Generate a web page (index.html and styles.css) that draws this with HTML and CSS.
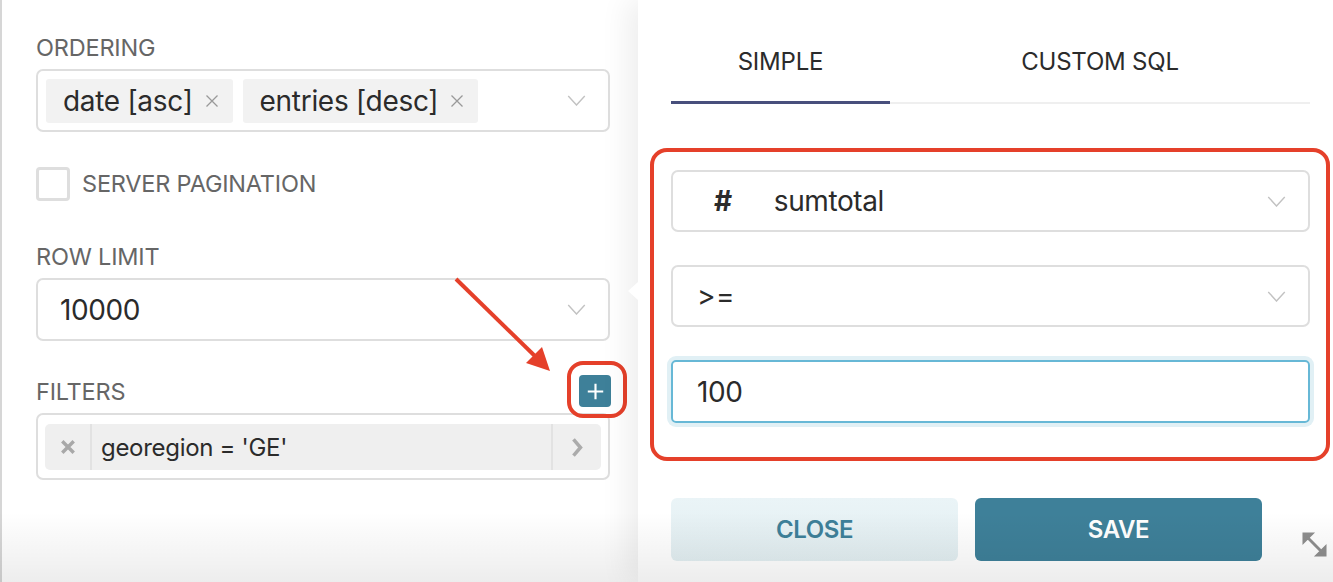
FILE: index.html
```html
<!DOCTYPE html>
<html>
<head>
<meta charset="utf-8">
<link rel="stylesheet" href="styles.css">
</head>
<body>
<div class="page">
  <section class="controls">
    <div class="label">ORDERING</div>
    <div class="select multi">
      <div class="tags">
        <span class="tag">date [asc]<svg class="tag-x" viewBox="0 0 14 14"><path d="M1.5 1.5l11 11M12.5 1.5l-11 11"/></svg></span>
        <span class="tag">entries [desc]<svg class="tag-x" viewBox="0 0 14 14"><path d="M1.5 1.5l11 11M12.5 1.5l-11 11"/></svg></span>
      </div>
      <svg class="chev" viewBox="0 0 20 12"><path d="M1 1l9 10 9-10"/></svg>
    </div>

    <label class="check-row">
      <span class="checkbox"></span>
      <span class="label">SERVER PAGINATION</span>
    </label>

    <div class="label row-limit">ROW LIMIT</div>
    <div class="select">
      <span class="value">10000</span>
      <svg class="chev" viewBox="0 0 20 12"><path d="M1 1l9 10 9-10"/></svg>
    </div>

    <div class="filters-head">
      <div class="label">FILTERS</div>
      <button class="add-btn"><svg viewBox="0 0 16 16"><path d="M8 1.5v13M1.5 8h13"/></svg></button>
    </div>
    <div class="filter-box">
      <div class="filter-pill">
        <span class="pill-x"><svg viewBox="0 0 14 14"><path d="M2 2l10 10M12 2L2 12"/></svg></span>
        <span class="pill-text">georegion = 'GE'</span>
        <span class="pill-go"><svg viewBox="0 0 10 18"><path d="M2 2l6 7-6 7"/></svg></span>
      </div>
    </div>

    <svg class="arrow" viewBox="0 0 110 100"><path class="shaft" d="M2 2L86 84"/><path class="head" d="M96 94L72 86L88 70Z"/></svg>
  </section>

  <section class="popover">
    <div class="tabs">
      <div class="tab active">SIMPLE</div>
      <div class="tab">CUSTOM SQL</div>
    </div>

    <div class="highlight">
      <div class="select">
        <span class="value"><span class="hash">#</span>sumtotal</span>
        <svg class="chev" viewBox="0 0 20 12"><path d="M1 1l9 10 9-10"/></svg>
      </div>
      <div class="select">
        <span class="value op">&gt;=</span>
        <svg class="chev" viewBox="0 0 20 12"><path d="M1 1l9 10 9-10"/></svg>
      </div>
      <div class="input">100</div>
    </div>

    <div class="buttons">
      <button class="btn btn-close">CLOSE</button>
      <button class="btn btn-save">SAVE</button>
    </div>

    <svg class="resize" viewBox="0 0 26 26"><path d="M2 2h8L2 10Z M24 24h-8l8-8Z M5 5l16 16"/></svg>
  </section>
</div>
</body>
</html>
```

FILE: styles.css
```css
* { box-sizing: border-box; }
html, body { margin: 0; padding: 0; }
body {
  width: 1333px;
  height: 582px;
  overflow: hidden;
  background: #fff;
  font-family: Inter, "Noto Sans", sans-serif;
  color: #2b2b2b;
}
.page {
  position: relative;
  display: flex;
  width: 1333px;
  height: 582px;
}
.page::after {
  content: "";
  position: absolute;
  left: 0; right: 0; bottom: 0;
  height: 70px;
  background: linear-gradient(to bottom, rgba(0,0,0,0), rgba(0,0,0,0.07));
  pointer-events: none;
  z-index: 5;
}

/* left controls */
.controls {
  position: relative;
  width: 638px;
  flex: none;
  border-left: 2px solid #d6d6d6;
  padding: 36px 28px 0 34px;
  display: flex;
  flex-direction: column;
}
.label {
  font-size: 23.5px;
  line-height: 24px;
  color: #666;
  letter-spacing: -0.2px;
}
.select {
  height: 63px;
  border: 2px solid #dedede;
  border-radius: 7px;
  display: flex;
  align-items: center;
  justify-content: space-between;
  padding: 0 22px 0 22px;
  background: #fff;
}
.controls > .select.multi { margin-top: 9px; padding-left: 8px; }
.tags { display: flex; gap: 10px; }
.tag {
  display: inline-flex;
  align-items: center;
  height: 44px;
  padding: 0 14px 0 17px;
  background: #f2f2f2;
  border-radius: 3px;
  font-size: 28px;
  color: #2b2b2b;
  letter-spacing: -0.3px;
}
.tag-x {
  width: 14px; height: 14px;
  margin-left: 12px;
  fill: none;
  stroke: #999;
  stroke-width: 1.3;
}
.chev {
  width: 19px; height: 11px;
  fill: none;
  stroke: #c2c2c2;
  stroke-width: 1.5;
  flex: none;
}
.value { font-size: 28px; color: #2b2b2b; letter-spacing: -0.4px; }

.check-row {
  margin-top: 35px;
  display: flex;
  align-items: center;
  height: 34px;
}
.checkbox {
  width: 34px; height: 34px;
  border: 3px solid #dedede;
  border-radius: 4px;
  margin-right: 12px;
}
.row-limit { margin-top: 44px; }
.controls > .select:not(.multi) { margin-top: 9px; }

.filters-head {
  margin-top: 34px;
  height: 32px;
  display: flex;
  align-items: center;
  justify-content: space-between;
}
.filters-head .label { margin-top: 2px; }
.add-btn {
  position: relative;
  width: 32px; height: 32px;
  margin-right: -1px;
  border: none;
  border-radius: 4px;
  background: #3e8099;
  padding: 0;
  display: flex;
  align-items: center;
  justify-content: center;
}
.add-btn svg { width: 19px; height: 19px; fill: none; stroke: #fff; stroke-width: 1.8; }
.add-btn::after {
  content: "";
  position: absolute;
  left: -12px; top: -14px;
  width: 60px; height: 57px;
  border: 4px solid #e5402a;
  border-radius: 16px;
  box-sizing: border-box;
}
.filter-box {
  margin-top: 6px;
  height: 67px;
  border: 2px solid #dedede;
  border-radius: 7px;
  padding: 9px 7px 0 7px;
}
.filter-pill {
  height: 46px;
  background: #efefef;
  border-radius: 5px;
  display: flex;
  align-items: stretch;
}
.pill-x {
  width: 47px;
  display: flex;
  align-items: center;
  justify-content: center;
  border-right: 2px solid #e2e2e2;
}
.pill-x svg { width: 16px; height: 16px; fill: none; stroke: #a8a8a8; stroke-width: 3; }
.pill-text {
  flex: 1;
  display: flex;
  align-items: center;
  padding-left: 9px;
  font-size: 24px;
  color: #2b2b2b;
  letter-spacing: -0.3px;
}
.pill-go {
  width: 50px;
  display: flex;
  align-items: center;
  justify-content: center;
  border-left: 2px solid #e2e2e2;
}
.pill-go svg { width: 12px; height: 21px; fill: none; stroke: #ababab; stroke-width: 3; }

.arrow {
  position: absolute;
  left: 452px; top: 277px;
  width: 110px; height: 100px;
  overflow: visible;
}
.arrow .shaft { stroke: #e5402a; stroke-width: 4; fill: none; }
.arrow .head { fill: #e5402a; }

/* popover */
.popover {
  position: relative;
  flex: 1;
  padding: 30px 23px 0 33px;
  background: #fff;
  box-shadow: -10px 0 28px rgba(0,0,0,0.07);
  z-index: 2;
}
.popover::before {
  content: "";
  position: absolute;
  left: -10px; top: 282px;
  width: 0; height: 0;
  border-top: 9px solid transparent;
  border-bottom: 9px solid transparent;
  border-right: 10px solid #fff;
}
.tabs {
  display: flex;
  border-bottom: 2px solid #efefef;
}
.tab {
  font-size: 24px;
  line-height: 24px;
  color: #2b2b2b;
  text-align: center;
  padding: 20px 0 27px;
  margin-bottom: -2px;
  border-bottom: 3px solid transparent;
  flex: 1;
  letter-spacing: -0.2px;
}
.tab.active {
  flex: none;
  width: 219px;
  border-bottom-color: #484f7c;
}
.highlight {
  margin: 44px -20px 0 -21px;
  border: 4px solid #e5402a;
  border-radius: 17px;
  padding: 18px 16px 34px 17px;
  display: flex;
  flex-direction: column;
  gap: 33px;
}
.highlight .select { height: 62px; padding-left: 24px; }
.hash { font-weight: 700; margin: 0 42px 0 17px; }
.op { letter-spacing: 0.5px; }
.input {
  height: 63px;
  border: 2px solid #67b8d6;
  border-radius: 5px;
  box-shadow: 0 0 0 4px #e1f0f5;
  font-size: 28px;
  display: flex;
  align-items: center;
  padding-left: 24px;
  letter-spacing: -0.4px;
}
.buttons {
  margin-top: 37px;
  display: flex;
  gap: 17px;
}
.btn {
  width: 287px;
  height: 63px;
  border: none;
  border-radius: 6px;
  font-family: Inter, "Noto Sans", sans-serif;
  font-size: 24px;
  font-weight: 600;
  letter-spacing: -0.4px;
}
.btn-close { background: linear-gradient(#eaf4f7, #e2eef1); color: #3e8099; }
.btn-save { background: #3e8099; color: #fff; }
.resize {
  position: absolute;
  right: 6px; bottom: 25px;
  width: 25px; height: 25px;
  fill: #8e8e8e;
  stroke: #8e8e8e;
  stroke-width: 3;
  z-index: 6;
}
```
